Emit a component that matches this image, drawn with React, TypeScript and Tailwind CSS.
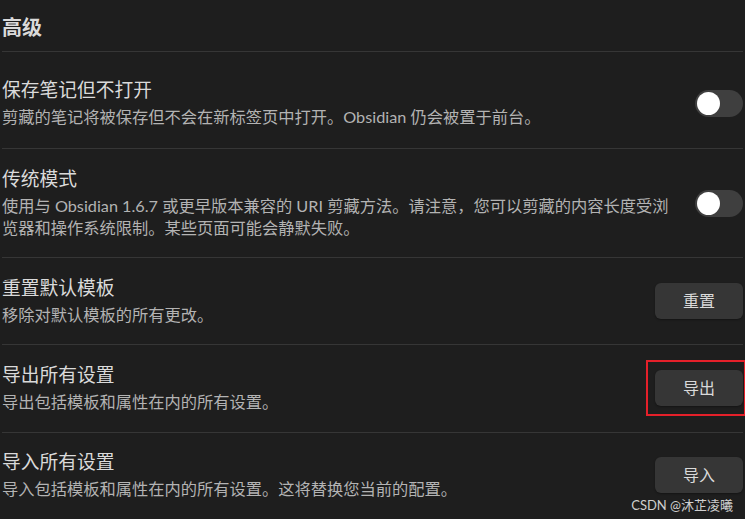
import React from "react";

const font = 'Lato, "Noto Sans CJK SC", sans-serif';

function Toggle() {
  return (
    <div className="relative h-[27px] w-[48px] shrink-0 rounded-full bg-[#3f3f3f]">
      <div className="absolute left-[2px] top-[2px] h-[23px] w-[23px] rounded-full bg-white" />
    </div>
  );
}

function Btn({ label }: { label: string }) {
  return (
    <button className="flex h-[36px] w-[88px] shrink-0 items-center justify-center rounded-[6px] bg-[#363636] text-[16px] text-[#dadada] shadow-[0_1px_2px_rgba(0,0,0,0.35)]">
      {label}
    </button>
  );
}

function Row({
  name,
  desc,
  control,
  className,
}: {
  name: string;
  desc: React.ReactNode;
  control: React.ReactNode;
  className: string;
}) {
  return (
    <div className={"flex items-center justify-between " + className}>
      <div className="flex flex-col">
        <div className="text-[18.75px] leading-[24px] text-[#dadada]">{name}</div>
        <div className="mt-[4px] whitespace-nowrap text-[16.25px] leading-[22px] text-[#b3b3b3]">{desc}</div>
      </div>
      {control}
    </div>
  );
}

export default function App() {
  return (
    <div
      className="relative min-h-[519px] w-[745px] overflow-hidden bg-[#1e1e1e] pl-[2px] pr-[2px]"
      style={{ fontFamily: font }}
    >
      <div className="box-border h-[52px] border-b border-[#363636] pt-[14px] text-[20px] font-bold leading-[26px] text-[#dadada]">
        高级
      </div>
      <Row
        className="border-b border-[#363636] pb-[20px] pt-[26px]"
        name="保存笔记但不打开"
        desc="剪藏的笔记将被保存但不会在新标签页中打开。Obsidian 仍会被置于前台。"
        control={<Toggle />}
      />
      <Row
        className="border-b border-[#363636] pb-[18px] pt-[18px]"
        name="传统模式"
        desc={
          <>
            使用与 Obsidian 1.6.7 或更早版本兼容的 URI 剪藏方法。请注意，您可以剪藏的内容长度受浏
            <br />
            览器和操作系统限制。某些页面可能会静默失败。
          </>
        }
        control={<Toggle />}
      />
      <Row
        className="border-b border-[#363636] pb-[18px] pt-[18px]"
        name="重置默认模板"
        desc="移除对默认模板的所有更改。"
        control={<Btn label="重置" />}
      />
      <Row
        className="border-b border-[#363636] pb-[19px] pt-[18px]"
        name="导出所有设置"
        desc="导出包括模板和属性在内的所有设置。"
        control={<Btn label="导出" />}
      />
      <Row
        className="pb-[18px] pt-[17px]"
        name="导入所有设置"
        desc="导入包括模板和属性在内的所有设置。这将替换您当前的配置。"
        control={<Btn label="导入" />}
      />
      <div className="pointer-events-none absolute left-[646px] top-[360px] h-[56px] w-[100px] border-2 border-[#e5202a]" />
      <div className="pointer-events-none absolute bottom-[6px] right-[12px] text-[13px] leading-[16px] text-[#cfcfcf]">
        CSDN @沐芷凌曦
      </div>
    </div>
  );
}
